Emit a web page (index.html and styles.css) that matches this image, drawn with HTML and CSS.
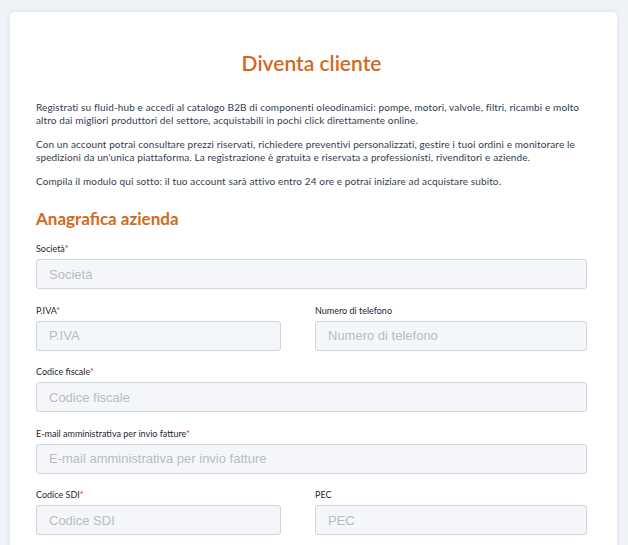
FILE: index.html
```html
<!DOCTYPE html>
<html lang="it">
<head>
  <meta charset="UTF-8" />
  <meta name="viewport" content="width=device-width, initial-scale=1.0"/>
  <title>Diventa cliente</title>
  <link rel="stylesheet" href="styles.css">
</head>
<body>

  <div class="card">

    <h1 class="title">Diventa cliente</h1>

    <div class="intro">
      <p>Registrati su fluid-hub e accedi al catalogo B2B di componenti oleodinamici: pompe, motori, valvole, filtri, ricambi e molto altro dai migliori produttori del settore, acquistabili in pochi click direttamente online.</p>
      <p>Con un account potrai consultare prezzi riservati, richiedere preventivi personalizzati, gestire i tuoi ordini e monitorare le spedizioni da un'unica piattaforma. La registrazione è gratuita e riservata a professionisti, rivenditori e aziende.</p>
      <p>Compila il modulo qui sotto: il tuo account sarà attivo entro 24 ore e potrai iniziare ad acquistare subito.</p>
    </div>

    <h2 class="section">Anagrafica azienda</h2>

    <form class="form">
      <div class="field">
        <label>Società<span class="req">*</span></label>
        <input type="text" placeholder="Società" />
      </div>

      <div class="row">
        <div class="field">
          <label>P.IVA<span class="req">*</span></label>
          <input type="text" placeholder="P.IVA" />
        </div>
        <div class="field">
          <label>Numero di telefono</label>
          <input type="text" placeholder="Numero di telefono" />
        </div>
      </div>

      <div class="field">
        <label>Codice fiscale<span class="req">*</span></label>
        <input type="text" placeholder="Codice fiscale" />
      </div>

      <div class="field">
        <label>E-mail amministrativa per invio fatture<span class="req">*</span></label>
        <input type="email" placeholder="E-mail amministrativa per invio fatture" />
      </div>

      <div class="row">
        <div class="field">
          <label>Codice SDI<span class="req">*</span></label>
          <input type="text" placeholder="Codice SDI" />
        </div>
        <div class="field">
          <label>PEC</label>
          <input type="text" placeholder="PEC" />
        </div>
      </div>
    </form>

  </div>

</body>
</html>
```

FILE: styles.css
```css
* { margin: 0; padding: 0; box-sizing: border-box; }
body {
  font-family: 'Lato', 'Noto Sans', sans-serif;
  background: #eff2f6;
  padding: 12px 11px 0 10px;
  height: 545px;
  overflow: hidden;
}
.card {
  background: #fff;
  border-radius: 5px;
  box-shadow: 0 0 6px rgba(40, 60, 90, 0.08);
  padding: 38px 30px 60px 26px;
  min-height: 600px;
}
.title {
  text-align: center;
  color: #d2691e;
  font-size: 21px;
  font-weight: 600;
  margin-bottom: 26px;
}
.intro p {
  font-size: 10px;
  line-height: 13px;
  letter-spacing: 0.12px;
  color: #323c50;
  margin-bottom: 11px;
}
.section {
  color: #d2691e;
  font-size: 17px;
  font-weight: 700;
  margin-top: 20px;
  margin-bottom: 14px;
}
.form {
  display: flex;
  flex-direction: column;
  gap: 15.5px;
}
.row {
  display: grid;
  grid-template-columns: 245px 1fr;
  gap: 34px;
}
.field label {
  display: block;
  font-size: 9px;
  color: #1f2430;
  margin-bottom: 5px;
}
.req {
  color: #e02424;
}
.field input {
  width: 100%;
  height: 30px;
  padding: 0 12px;
  background: #f4f6f9;
  border: 1px solid #cbd4e0;
  border-radius: 3px;
  font-family: 'Liberation Sans', Arial, sans-serif;
  font-size: 13px;
  color: #333;
}
.field input::placeholder {
  color: #b8bcc2;
}
```
